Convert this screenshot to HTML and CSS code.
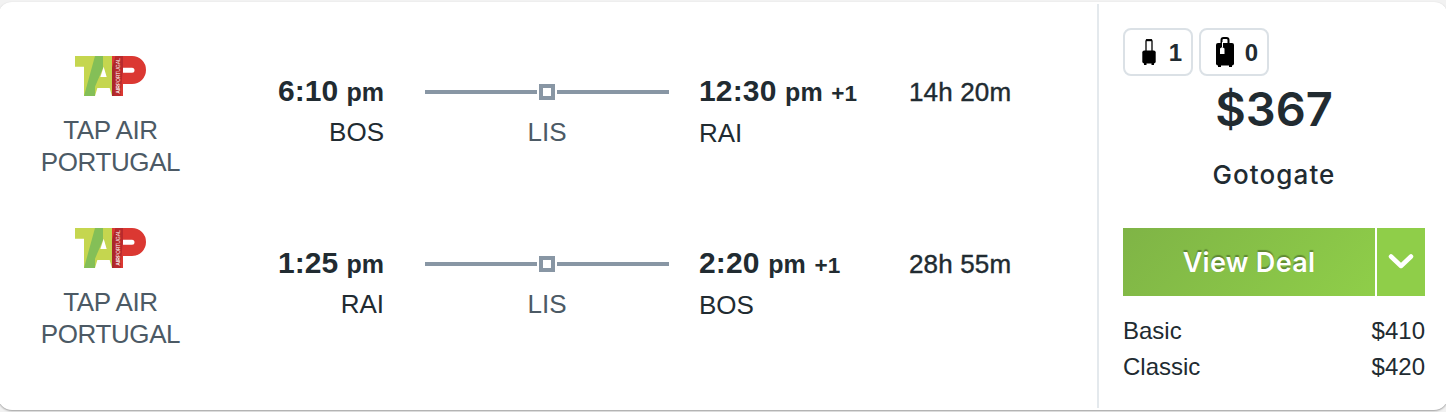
FILE: index.html
```html
<!DOCTYPE html>
<html lang="en">
  <head>
    <meta charset="UTF-8" />
    <meta name="viewport" content="width=device-width, initial-scale=1.0" />
    <title>Flights</title>
    <link rel="stylesheet" href="styles.css">
  </head>
  <body>
    <svg class="defs" width="0" height="0">
      <symbol id="tap-logo" viewBox="0 0 213 120">
        <path fill="#c5d64f" d="M0 0H111V120L104 96H67L60 120H27V32H0Z" />
        <path fill="#84bf57" d="M60 0H84V36L60 92V120H27Z" />
        <path fill="#fff" d="M86 32L95 63H76Z" />
        <path fill="#db3832" d="M111 0H171A42 42 0 0 1 171 84H144V120H111Z" />
        <path fill="#a9292b" d="M111 36L122 0H144L136 120H111Z" />
        <path fill="#b92a2c" d="M122 0H144V36L136 120H118Z" />
        <path fill="#fff" d="M144 35H171A7.500 7.500 0 0 1 171 50H144Z" />
        <text class="logo-text" transform="translate(134 113) rotate(-90)" textLength="106" lengthAdjust="spacingAndGlyphs"><tspan font-weight="bold">AIR</tspan>PORTUGAL</text>
      </symbol>
    </svg>
    <div class="card">
      <div class="legs">
        <div class="leg">
          <div class="airline">
            <svg class="logo"><use href="#tap-logo" /></svg>
            <div>TAP AIR<br>PORTUGAL</div>
          </div>
          <div class="depart">
            <div class="time">6:10 <span class="ampm">pm</span></div>
            <div class="airport">BOS</div>
          </div>
          <div class="route">
            <div class="line"><span class="stop"></span></div>
            <div class="via">LIS</div>
          </div>
          <div class="arrive">
            <div class="time">12:30 <span class="ampm">pm</span> <span class="plus">+1</span></div>
            <div class="airport">RAI</div>
          </div>
          <div class="duration">14h 20m</div>
        </div>
        <div class="leg">
          <div class="airline">
            <svg class="logo"><use href="#tap-logo" /></svg>
            <div>TAP AIR<br>PORTUGAL</div>
          </div>
          <div class="depart">
            <div class="time">1:25 <span class="ampm">pm</span></div>
            <div class="airport">RAI</div>
          </div>
          <div class="route">
            <div class="line"><span class="stop"></span></div>
            <div class="via">LIS</div>
          </div>
          <div class="arrive">
            <div class="time">2:20 <span class="ampm">pm</span> <span class="plus">+1</span></div>
            <div class="airport">BOS</div>
          </div>
          <div class="duration">28h 55m</div>
        </div>
      </div>
      <div class="deal">
        <div class="bags">
          <div class="bag">
            <svg width="14" height="26" viewBox="0 0 14 26">
              <path d="M4 12V2Q4 1 5 1H9Q10 1 10 2V12" fill="none" stroke="#000" stroke-width="1.300" />
              <path d="M4 1.200H10" stroke="#000" stroke-width="2" />
              <rect x="0.300" y="11.500" width="13.400" height="13" rx="2" />
              <rect x="2" y="24" width="2.500" height="2" />
              <rect x="9.500" y="24" width="2.500" height="2" />
            </svg>
            <span>1</span>
          </div>
          <div class="bag">
            <svg width="18" height="30" viewBox="0 0 18 30">
              <path d="M5.500 6V3Q5.500 1 7.500 1H10.500Q12.500 1 12.500 3V6" fill="none" stroke="#000" stroke-width="2" />
              <rect x="0" y="6" width="18" height="22.500" rx="2" />
              <rect x="2" y="28" width="3" height="2" />
              <rect x="13" y="28" width="3" height="2" />
              <path d="M6.500 5V10" stroke="#fff" />
              <path d="M4 11.500L6.200 10L8.500 11.500V17H4Z" fill="#fff" />
            </svg>
            <span>0</span>
          </div>
        </div>
        <div class="price">$367</div>
        <div class="provider">Gotogate</div>
        <div class="buttons">
          <button class="view-btn">View Deal</button>
          <button class="more-btn" aria-label="More fares">
            <svg width="26" height="16" viewBox="0 0 26 16">
              <path d="M3 3.500L13 13L23 3.500" fill="none" stroke="#fff" stroke-width="4.500" stroke-linecap="round" stroke-linejoin="round" />
            </svg>
          </button>
        </div>
        <div class="fare"><span>Basic</span><span>$410</span></div>
        <div class="fare"><span>Classic</span><span>$420</span></div>
      </div>
    </div>
  </body>
</html>
```
FILE: styles.css
```css
* {
  box-sizing: border-box;
}
body {
  margin: 0;
  height: 412px;
  padding-top: 2px;
  overflow: hidden;
  font-family: "Liberation Sans", Arial, sans-serif;
  font-size: 26px;
  color: #212b31;
  background-color: #f2f2f2;
}
.defs {
  display: block;
}
.card {
  display: flex;
  height: 408px;
  margin: 0 -2px;
  padding: 2px;
  background-color: #fff;
  border-radius: 14px;
  box-shadow: 0 1px 2px rgba(0, 0, 0, 0.35);
}
.legs {
  flex: 1;
  padding-top: 52px;
}
.leg {
  display: grid;
  grid-template-columns: 221px 163px 41px 244px 30px 210px 1fr;
  height: 172px;
}
.airline {
  display: flex;
  flex-direction: column;
  align-items: center;
  text-align: center;
  line-height: 32px;
  color: #4c5a65;
  letter-spacing: -0.4px;
}
.logo {
  width: 71px;
  height: 40px;
  margin-bottom: 18px;
}
.logo-text {
  font-size: 18px;
  fill: #fff;
}
.depart {
  grid-column: 2;
  text-align: right;
}
.route {
  grid-column: 4;
  padding-top: 28px;
  text-align: center;
}
.arrive {
  grid-column: 6;
}
.duration {
  grid-column: 7;
  padding-top: 20px;
  line-height: 32px;
  letter-spacing: 0.15px;
  -webkit-text-stroke: 0.4px #212b31;
}
.time {
  height: 55px;
  padding-top: 15px;
  font-size: 30px;
  font-weight: bold;
  line-height: 40px;
  white-space: nowrap;
}
.arrive .time {
  height: 56px;
  letter-spacing: 0.15px;
}
.ampm {
  font-size: 25px;
}
.plus {
  font-size: 22.500px;
}
.airport {
  padding-top: 5px;
  line-height: 32px;
}
.line {
  display: flex;
  align-items: center;
  justify-content: center;
  height: 16px;
}
.line::before,
.line::after {
  content: "";
  flex: 1;
  height: 4px;
  background-color: #8896a4;
}
.stop {
  width: 16px;
  height: 16px;
  margin: 0 2px;
  border: 4px solid #8896a4;
}
.via {
  padding-top: 16px;
  line-height: 32px;
  color: #4c5a65;
}
.deal {
  width: 349px;
  padding: 24px 21px 0 24px;
  border-left: 2px solid #e4e9ed;
}
.bags {
  display: flex;
  gap: 6px;
}
.bag {
  display: flex;
  align-items: center;
  justify-content: space-between;
  width: 70px;
  height: 48px;
  padding: 0 9px 0 17px;
  border: 2px solid #dbe1e6;
  border-radius: 8px;
  font-size: 24px;
  font-weight: bold;
}
.bag span {
  padding-top: 2px;
}
.bag + .bag {
  padding-left: 15px;
}
.price {
  padding-top: 3px;
  font-family: Inter, sans-serif;
  font-size: 47px;
  font-weight: 600;
  line-height: 60px;
  text-align: center;
}
.provider {
  height: 53px;
  padding-top: 18px;
  font-family: Inter, sans-serif;
  font-size: 26px;
  font-weight: 500;
  line-height: 36px;
  letter-spacing: 1.100px;
  text-align: center;
}
.buttons {
  display: flex;
  gap: 2px;
  height: 68px;
  margin: 36px 0 17px;
}
.buttons button {
  padding: 0;
  border: none;
  cursor: pointer;
}
.view-btn {
  width: 252px;
  font-family: Inter, sans-serif;
  font-size: 27px;
  font-weight: 600;
  letter-spacing: 0.3px;
  color: #fff;
  text-shadow: 0 -2px 1px rgba(0, 0, 0, 0.3);
  background: linear-gradient(135deg, #7fb446, #8fce49);
}
.more-btn {
  width: 48px;
  background-color: #8fce49;
}
.fare {
  display: flex;
  justify-content: space-between;
  font-size: 24px;
  line-height: 36px;
}
```
